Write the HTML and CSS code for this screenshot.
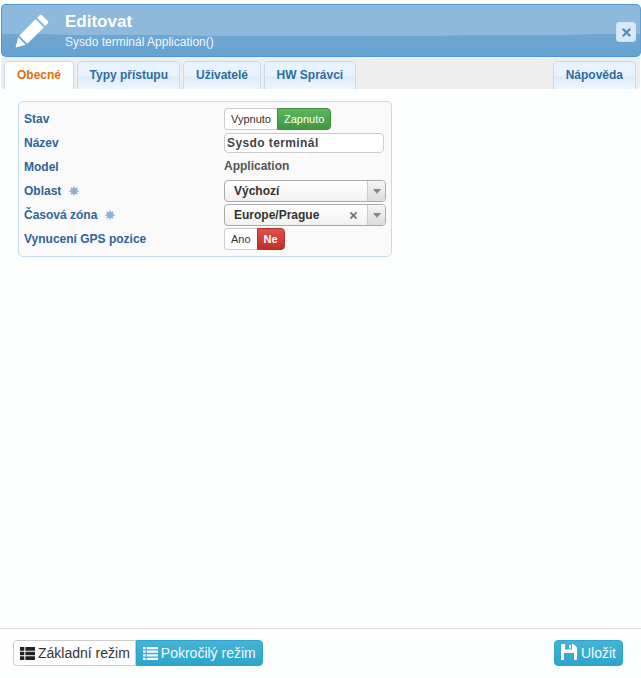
FILE: index.html
```html
<!DOCTYPE html>
<html lang="cs">
<head>
<meta charset="utf-8">
<title>Editovat</title>
<link rel="stylesheet" href="styles.css">
</head>
<body>
<div class="dialog">
  <header class="head">
    <svg class="pencil" viewBox="0 0 34 34"><path fill="#fff" d="M27 1.2l5.8 5.800c.7.7.7 1.600 0 2.300l-2.600 2.600-8.100-8.100 2.600-2.600c.7-.7 1.600-.7 2.300 0zM20.600 5.300l8.100 8.100L12.300 29.800 4.200 21.700zM3.300 23.300l7.400 7.400L.6 33.600z"/></svg>
    <div class="titles">
      <div class="title">Editovat</div>
      <div class="subtitle">Sysdo terminál Application()</div>
    </div>
    <button class="close" type="button"><svg viewBox="0 0 10 10"><path fill="#5f8fb5" d="M2.300.8L5 3.500 7.700.8l1.500 1.500L6.500 5l2.700 2.700-1.500 1.500L5 6.500 2.300 9.200.8 7.700 3.500 5 .8 2.300z"/></svg></button>
  </header>
  <nav class="tabs">
    <a class="tab active">Obecné</a>
    <a class="tab">Typy přístupu</a>
    <a class="tab">Uživatelé</a>
    <a class="tab wide">HW Správci</a>
    <a class="tab wide help">Nápověda</a>
  </nav>
  <main class="content">
    <section class="panel">
      <div class="row"><label class="lbl">Stav</label>
        <div class="toggle"><span class="opt">Vypnuto</span><span class="opt green">Zapnuto</span></div></div>
      <div class="row"><label class="lbl">Název</label>
        <input class="text" type="text" value="Sysdo terminál"></div>
      <div class="row"><label class="lbl">Model</label><span class="value">Application</span></div>
      <div class="row"><label class="lbl">Oblast<svg class="req" viewBox="0 0 10 10"><path d="M5 .3v9.400M.3 5h9.400M1.700 1.700l6.600 6.600M8.300 1.700L1.700 8.300"/><circle cx="5" cy="5" r="2.600"/></svg></label>
        <div class="select"><span class="sel-text">Výchozí</span><span class="arrow"><i></i></span></div></div>
      <div class="row"><label class="lbl">Časová zóna<svg class="req" viewBox="0 0 10 10"><path d="M5 .3v9.400M.3 5h9.400M1.700 1.700l6.600 6.600M8.300 1.700L1.700 8.300"/><circle cx="5" cy="5" r="2.600"/></svg></label>
        <div class="select"><span class="sel-text">Europe/Prague</span><svg class="clear" viewBox="0 0 10 10"><path fill="#777" d="M2.300.8L5 3.500 7.700.8l1.500 1.500L6.500 5l2.700 2.700-1.500 1.500L5 6.500 2.300 9.200.8 7.700 3.500 5 .8 2.300z"/></svg><span class="arrow"><i></i></span></div></div>
      <div class="row"><label class="lbl">Vynucení GPS pozice</label>
        <div class="toggle"><span class="opt">Ano</span><span class="opt red">Ne</span></div></div>
    </section>
  </main>
  <footer class="foot">
    <div class="modes">
      <button class="btn plain" type="button"><svg class="ico" viewBox="0 0 14 12" preserveAspectRatio="none"><path fill="#222" d="M0 0h4v3.400H0zM5 0h9v3.400H5zM0 4.300h4v3.400H0zM5 4.300h9v3.400H5zM0 8.600h4V12H0zM5 8.600h9V12H5z"/></svg>Základní režim</button><button class="btn info joined" type="button"><svg class="ico" viewBox="0 0 14 12" preserveAspectRatio="none"><path fill="#fff" d="M0 0h2.500v2H0zM3.500 0H14v2H3.500zM0 3.300h2.500v2H0zM3.500 3.300H14v2H3.500zM0 6.700h2.500v2H0zM3.500 6.700H14v2H3.500zM0 10h2.500v2H0zM3.500 10H14v2H3.500z"/></svg>Pokročilý režim</button>
    </div>
    <button class="btn info save" type="button"><svg class="ico disk" viewBox="0 0 16 16"><path fill="#fff" fill-rule="evenodd" d="M1 0h11.500L16 3.500V15a1 1 0 0 1-1 1H1a1 1 0 0 1-1-1V1a1 1 0 0 1 1-1zM4 0v5.500h7V0zM8 1h2v3.500H8zM3 9v7h10V9z"/></svg>Uložit</button>
  </footer>
</div>
</body>
</html>
```
FILE: styles.css
```css
* { box-sizing: border-box; }
html, body { margin: 0; height: 100%; }
body { background: #fdfefe; font-family: "Liberation Sans", Arial, sans-serif; font-size: 12px; color: #333; overflow: hidden; }
.dialog { height: 678px; padding-top: 4px; display: flex; flex-direction: column; }
.head {
  margin-left: 1px; height: 53px; flex: none; display: flex; align-items: center;
  border: 1px solid #4d96d2; border-right-color: #5b9ed2; border-radius: 5px;
  background:
    radial-gradient(ellipse 900px 31px at 50% 0, #8cb9dc 0, #8cb9dc 99%, transparent 100%),
    linear-gradient(#7aabd3, #67a2d1);
}
.pencil { width: 34px; height: 34px; margin: 0 0 0 13px; flex: none; }
.titles { margin-left: 16px; color: #fff; }
.title { font-size: 17px; font-weight: bold; line-height: 18px; margin-top: 1px; }
.subtitle { font-size: 12px; line-height: 14px; margin-top: 4px; color: #f2f7fb; }
.close {
  margin-left: auto; margin-right: 4px; margin-top: 3px; width: 20px; height: 20px; padding: 0;
  border: 1px solid #cfe2f2; border-radius: 3px; background: #dbe9f5;
  display: flex; align-items: center; justify-content: center;
}
.close svg { width: 11px; height: 11px; }
.tabs { margin: 0 1px; height: 32px; flex: none; background: #eee; border-radius: 0 0 4px 4px; padding: 4px 4px 0 3px; display: flex; gap: 3px; }
.tab {
  height: 28px; padding: 0 11.5px; border: 1px solid #c5dbee; border-bottom: 0; border-radius: 5px 5px 0 0;
  background: linear-gradient(#e9f3fd 0, #e9f3fd 50%, #dcecfa 55%, #eef6fd 100%);
  color: #2e6da4; font-weight: bold; font-size: 12px; line-height: 27px;
}
.tab.wide { padding: 0 12px; }
.tab.active { background: #fdfefe; color: #e46f0a; padding: 0 12px; }
.tab.help { margin-left: auto; }
.content { flex: 1; padding: 12px 18px; }
.panel { width: 374px; height: 156px; border: 1px solid #c5dcf0; border-radius: 5px; background: #fafafb; padding: 5px 0 0 5px; }
.row { height: 24px; display: flex; align-items: center; }
.lbl { width: 200px; flex: none; font-weight: bold; color: #2e6594; font-size: 12px; display: flex; align-items: center; }
.req { width: 10px; height: 10px; margin-left: 8px; fill: #92b1cc; stroke: #92b1cc; stroke-width: 1.3; }
.toggle { display: flex; height: 22px; }
.opt { padding: 0 6px; line-height: 20px; font-size: 11px; background: #fff; border: 1px solid #ccc; border-right: 0; border-radius: 4px 0 0 4px; color: #333; }
.green, .red { border: 1px solid transparent; border-radius: 0 4px 4px 0; color: #fff; }
.green { background: linear-gradient(#5cb85c, #419641); border-color: #3e8f3e; }
.red { background: linear-gradient(#d9534f, #c12e2a); border-color: #b92c28; font-weight: bold; padding: 0 6px; }
.text { width: 160px; height: 20px; flex: none; padding: 0 2px; margin: 0; border: 1px solid #ccc; border-radius: 4px; background: #fff; font: bold 12px "Liberation Sans", Arial, sans-serif; letter-spacing: .4px; color: #444; }
.value { font-weight: bold; color: #555; font-size: 12px; margin-bottom: 2px; }
.select { width: 162px; height: 22px; flex: none; display: flex; align-items: center; border: 1px solid #aaa; border-radius: 4px; background: linear-gradient(#fff, #f1f1f1); }
.sel-text { padding-left: 9px; font-weight: bold; color: #333; flex: 1; }
.clear { width: 9px; height: 9px; margin-right: 9px; }
.arrow { width: 18px; height: 100%; border-left: 1px solid #ccc; background: linear-gradient(#f5f5f5, #ddd); border-radius: 0 3px 3px 0; display: flex; align-items: center; justify-content: center; }
.arrow i { width: 0; height: 0; border: 4px solid transparent; border-top: 5px solid #888; border-bottom: 0; }
.foot { height: 50px; flex: none; border-top: 1px solid #ddd; padding: 11px 18px 0 13px; display: flex; justify-content: space-between; align-items: flex-start; }
.modes { display: flex; }
.btn { height: 26px; font: 14px "Liberation Sans", Arial, sans-serif; padding: 0 6px; border: 1px solid #ccc; border-radius: 4px; display: flex; align-items: center; }
.plain { background: #fff; color: #333; border-radius: 4px 0 0 4px; padding-right: 5px; }
.info { background: linear-gradient(#45b4d6, #2da5cb); border-color: #2da5cb; color: #f2fbfe; }
.joined { border-radius: 0 4px 4px 0; }
.ico { width: 15px; height: 13px; margin-right: 3px; }
.disk { width: 16px; height: 16px; margin-right: 4px; margin-top: -3px; }
.save { padding: 0 6px; }
```
